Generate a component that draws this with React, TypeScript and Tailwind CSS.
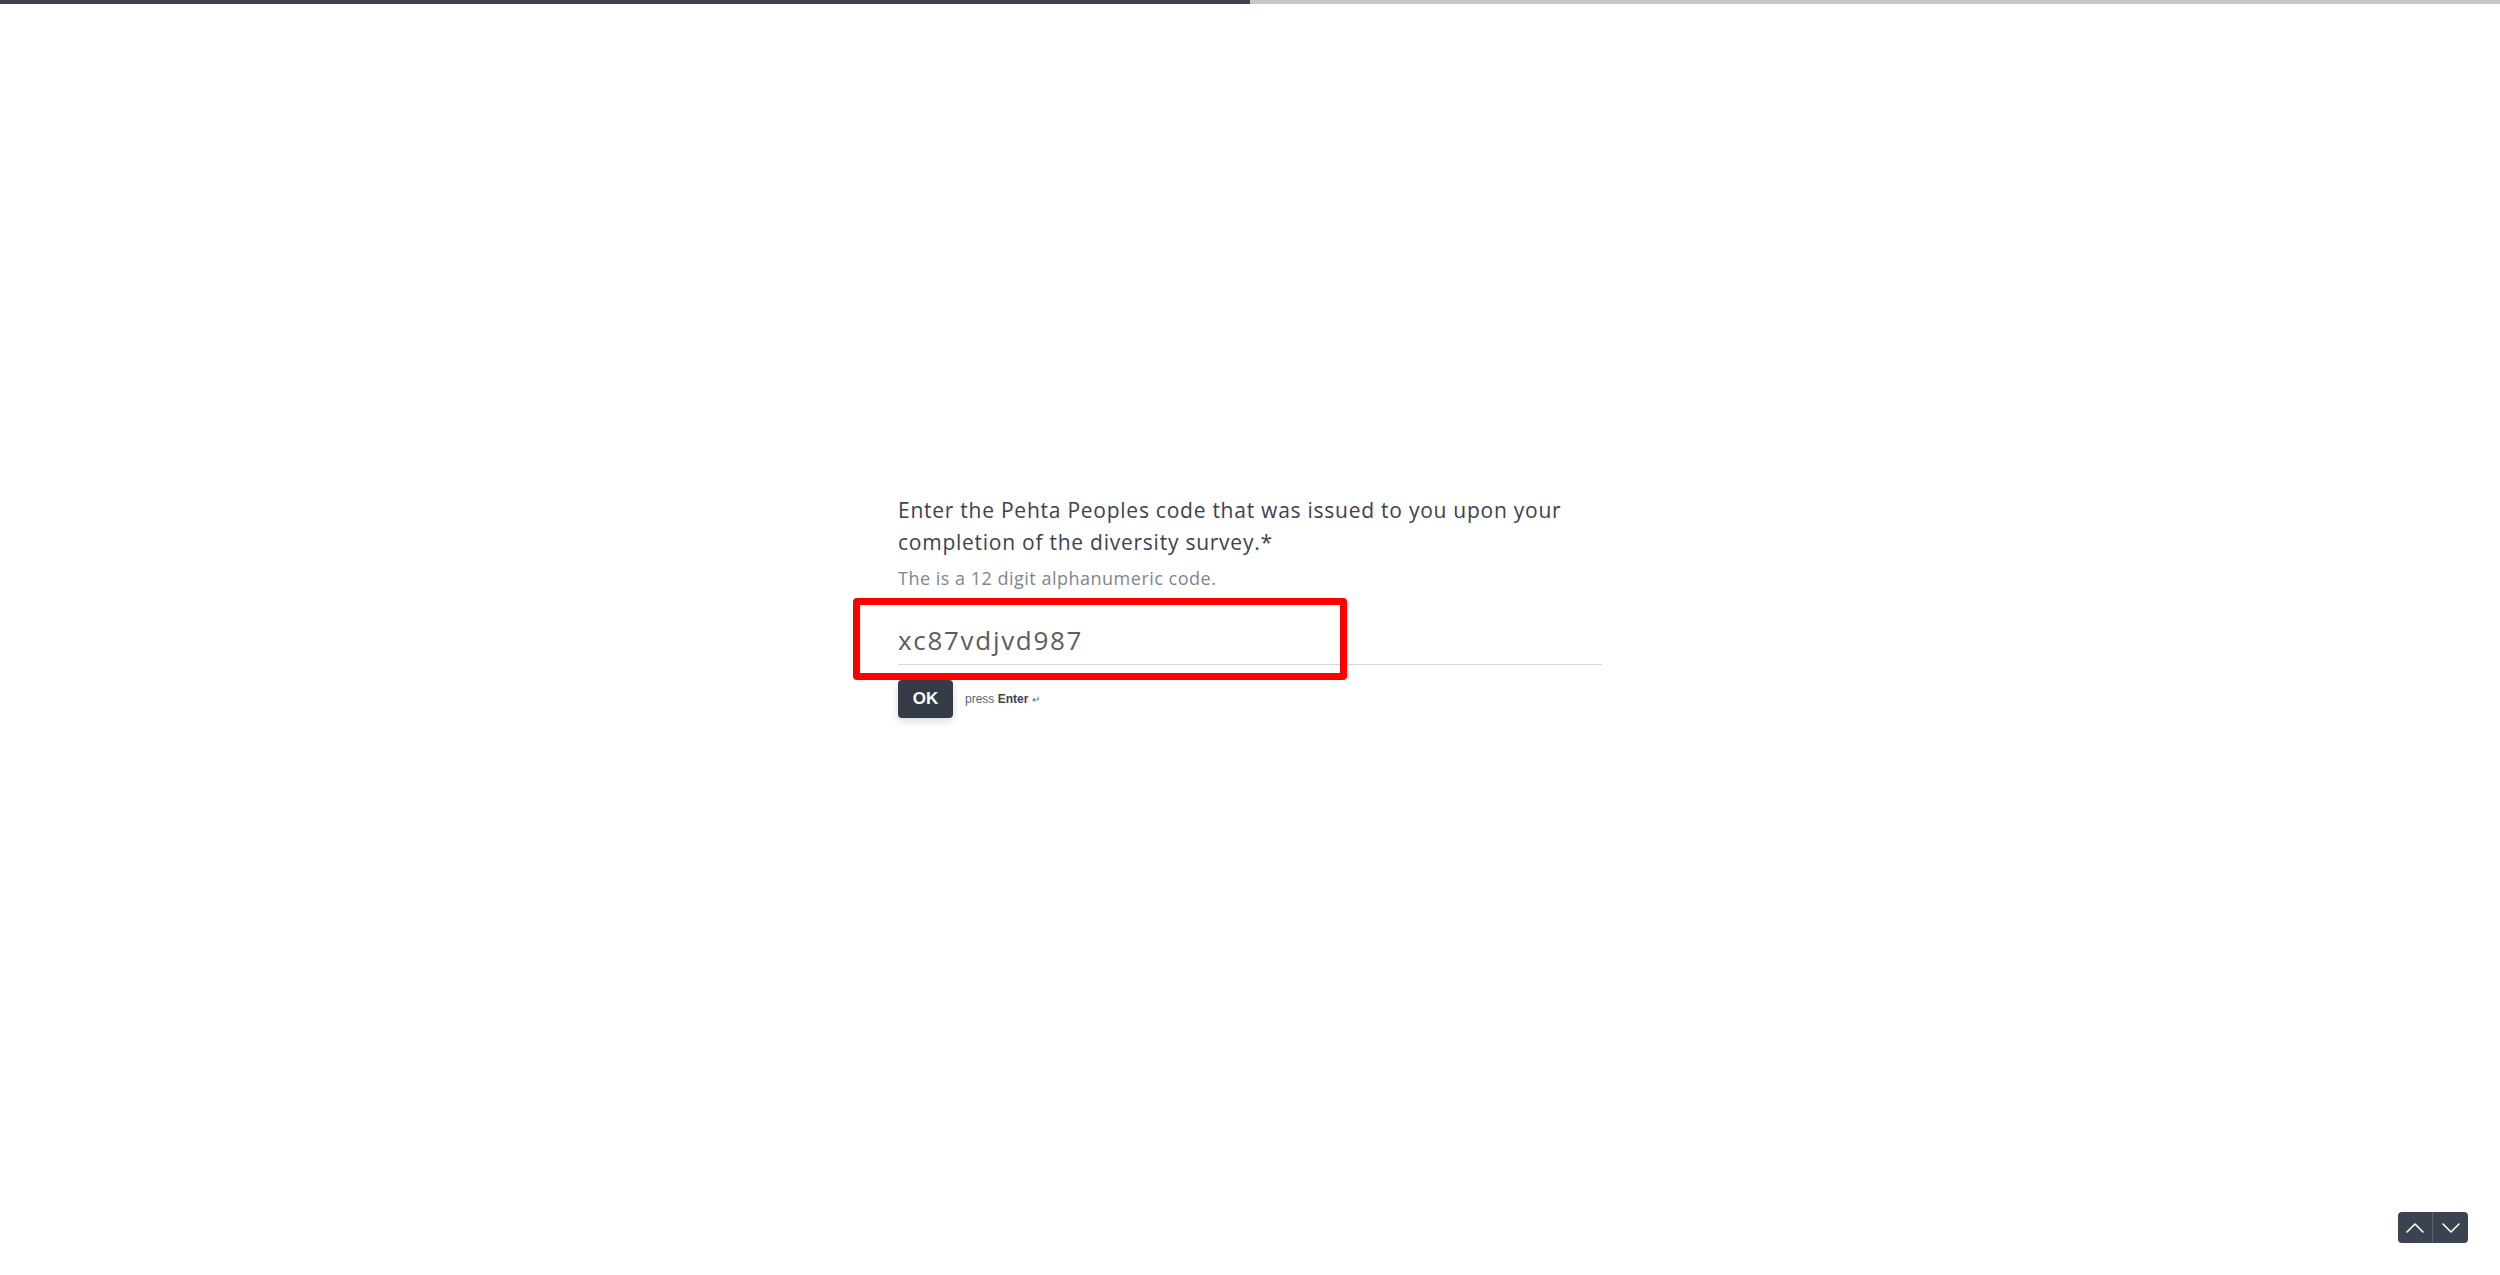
const QUESTION =
  'Enter the Pehta Peoples code that was issued to you upon your'

function Chevron({ up }: { up?: boolean }) {
  return (
    <svg width="18" height="10" viewBox="0 0 18 10" fill="none" stroke="currentColor" strokeWidth="1.6" strokeLinecap="round" strokeLinejoin="round">
      <polyline points={up ? '1,9 9,1 17,9' : '1,1 9,9 17,1'} />
    </svg>
  )
}

export default function App() {
  return (
    <div className="relative h-[1275px] w-full overflow-hidden bg-white font-['Open_Sans','Noto_Sans',sans-serif]">
      {/* progress */}
      <div className="flex h-1 w-full">
        <div className="w-1/2 bg-[#3d4451]" />
        <div className="flex-1 bg-[#c5c6c9]" />
      </div>

      <main className="flex justify-center pt-[490px]">
        <div className="w-[704px]">
          <h1 className="text-[21px] leading-[32px] tracking-[0.75px] text-[#3b4250]">
            {QUESTION}
            <br />
            completion of the diversity survey.*
          </h1>
          <p className="mt-[8px] text-[18px] leading-[24px] tracking-[0.5px] text-[#80858f]">
            The is a 12 digit alphanumeric code.
          </p>

          <div className="relative mt-[32px]">
            <input
              readOnly
              value="xc87vdjvd987"
              className="block w-full border-b border-[#d6d6d6] bg-transparent pb-[6px] text-[26px] leading-[36px] tracking-[1.7px] text-[#5c5c5c] outline-none"
            />
            {/* highlight box */}
            <div className="pointer-events-none absolute left-[-45px] top-[-24px] h-[82px] w-[494px] rounded-[4px] border-[7px] border-[#ff0000]" />
          </div>

          <div className="mt-[15px] flex items-center gap-3 font-['Liberation_Sans',Arial,sans-serif]">
            <button className="h-[38px] w-[55px] rounded-[4px] bg-[#353b47] text-[17px] font-bold text-white shadow-[0_3px_8px_rgba(0,0,0,0.15)]">
              OK
            </button>
            <span className="text-[12px] text-[#5d6470]">
              press <b className="text-[#3b4250]">Enter</b> <span className="text-[10px]">↵</span>
            </span>
          </div>
        </div>
      </main>

      {/* up / down nav */}
      <div className="absolute bottom-[32px] right-[32px] flex h-[31px] overflow-hidden rounded-[4px] bg-[#3b4250]">
        <button className="flex w-[35px] items-center justify-center border-r border-[#5e6573] text-white">
          <Chevron up />
        </button>
        <button className="flex w-[35px] items-center justify-center text-white">
          <Chevron />
        </button>
      </div>
    </div>
  )
}
